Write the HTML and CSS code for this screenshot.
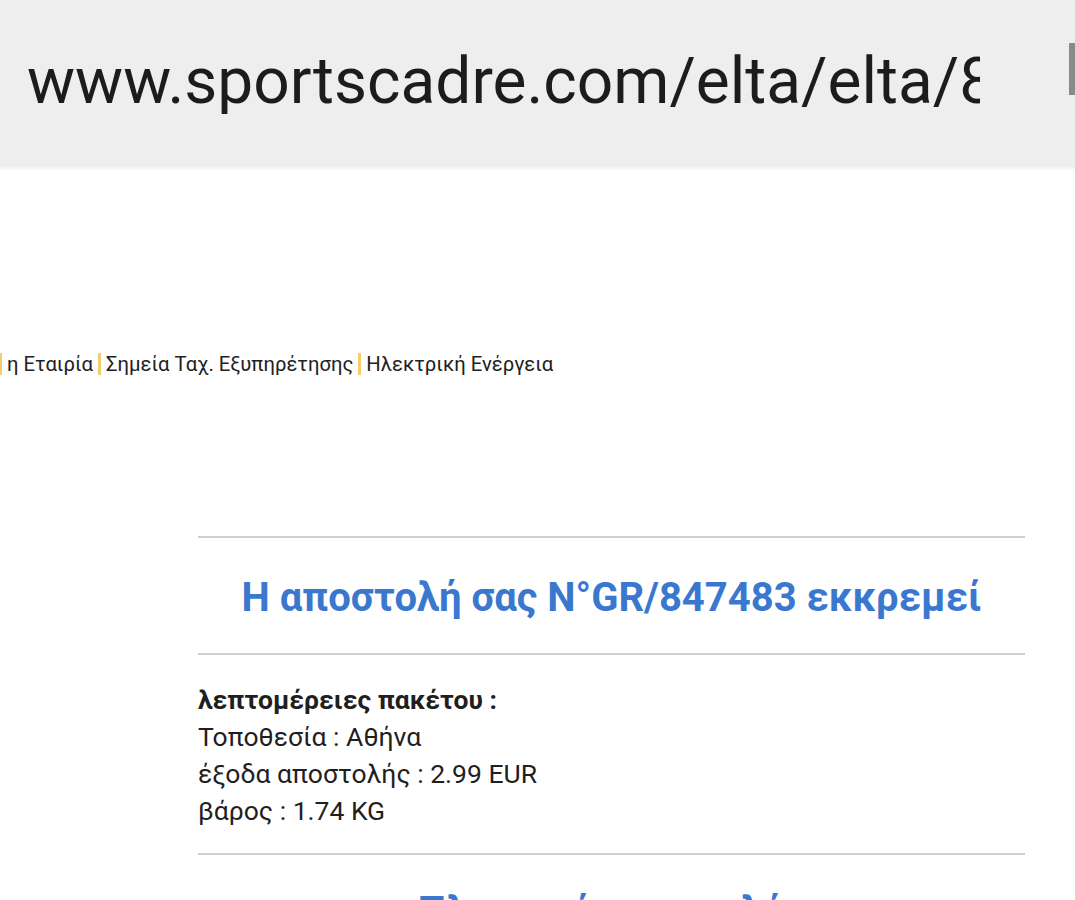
FILE: index.html
```html
<!DOCTYPE html>
<html lang="el">
<head>
  <meta charset="UTF-8" />
  <meta name="viewport" content="width=device-width, initial-scale=1.0"/>
  <title>ΕΛΤΑ - Παρακολούθηση αποστολής</title>
  <link rel="stylesheet" href="styles.css">
</head>
<body>
  <div class="url-bar">
    <div class="url-text">www.sportscadre.com/elta/elta/847483</div>
    <div class="url-edge"></div>
  </div>

  <div class="top-nav">
    <span class="sep"></span><a href="#">η Εταιρία</a><span class="sep"></span><a href="#">Σημεία Ταχ. Εξυπηρέτησης</a><span class="sep"></span><a href="#">Ηλεκτρική Ενέργεια</a>
  </div>

  <div class="content">
    <hr class="rule">
    <h2 class="title">Η αποστολή σας N°GR/847483 εκκρεμεί</h2>
    <hr class="rule">
    <div class="details">
      <strong>λεπτομέρειες πακέτου :</strong><br>
      Τοποθεσία : Αθήνα<br>
      έξοδα αποστολής : 2.99 EUR<br>
      βάρος : 1.74 KG
    </div>
    <hr class="rule">
    <h2 class="title title-next">Πληρωμή αποστολής</h2>
  </div>
</body>
</html>
```

FILE: styles.css
```css
body {
  margin: 0;
  font-family: Roboto, 'Noto Sans', sans-serif;
  background: #fff;
  color: #1f1f1f;
  height: 900px;
  overflow: hidden;
}
.url-bar {
  height: 167px;
  background: #edeeed;
  display: flex;
  align-items: center;
  box-shadow: 0 2px 3px rgba(0, 0, 0, 0.06);
}
.url-text {
  margin-left: 27px;
  width: 953px;
  flex-shrink: 0;
  overflow: hidden;
  white-space: nowrap;
  font-size: 64px;
  line-height: 1;
  color: #1c1c1c;
  margin-top: -4px;
}
.url-edge {
  margin-left: auto;
  width: 6px;
  height: 52px;
  background: #8a8a8a;
  margin-top: -30px;
}
.top-nav {
  margin-top: 185px;
  font-size: 20.3px;
  color: #222;
  white-space: nowrap;
}
.top-nav a {
  color: #222;
  text-decoration: none;
}
.sep {
  display: inline-block;
  width: 3px;
  height: 22px;
  background: #f3cc6b;
  vertical-align: -4px;
  margin: 0 5px 0 5px;
}
.top-nav .sep:first-child {
  margin-left: -1px;
}
.content {
  width: 827px;
  margin: 160px 0 0 198px;
}
.rule {
  border: none;
  height: 2px;
  background: #cfcfcf;
  margin: 0;
}
.title {
  color: #3a78d0;
  font-size: 40px;
  font-weight: 700;
  text-align: center;
  margin: 0;
  padding: 36px 0 32px;
}
.title-next {
  padding-top: 33px;
}
.details {
  font-size: 26.5px;
  line-height: 37px;
  padding: 26px 0 24px;
  color: #1f1f1f;
}
.details strong {
  font-weight: 700;
}
```
